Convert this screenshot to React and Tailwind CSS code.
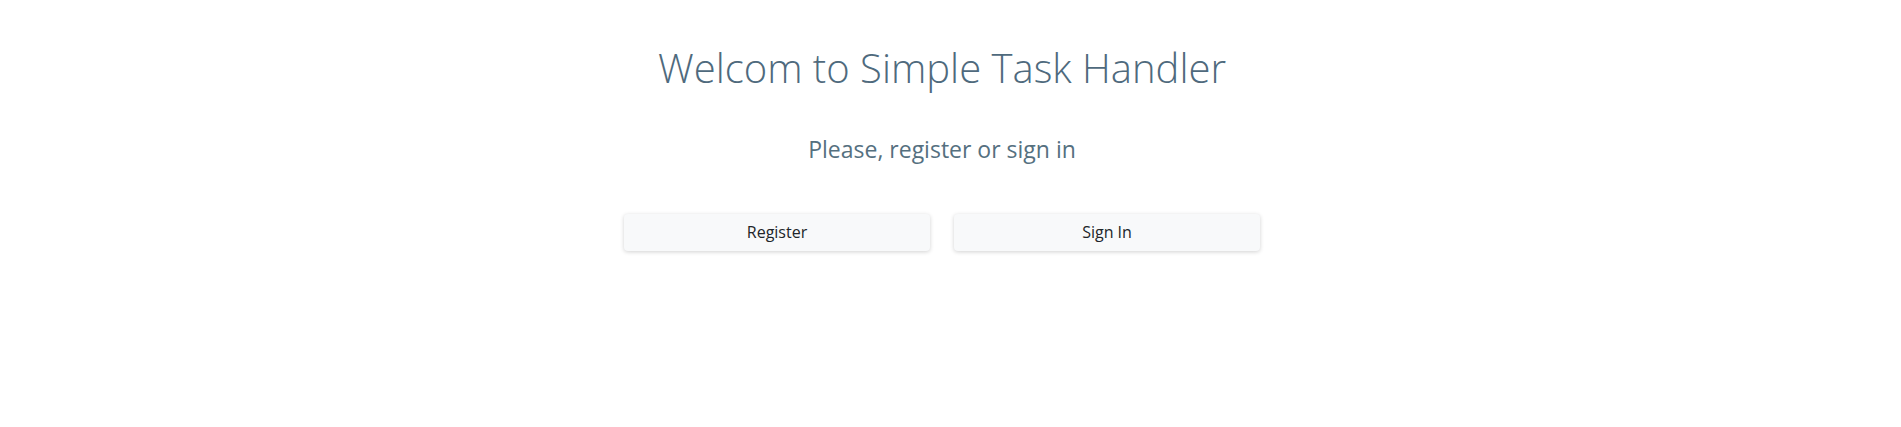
import React from "react";

const App = () => {
	return (
		<div className="min-h-[427px] bg-white pr-[17px]" style={{ fontFamily: '"Open Sans", "Noto Sans", sans-serif' }}>
			<div className="flex flex-col items-center pt-[44px]">
				<h1 className="text-[40px] font-light leading-[1.2] text-[#4f6a7d]">Welcom to Simple Task Handler</h1>
				<h3 className="mt-[44px] text-[23px] font-normal leading-[1.2] text-[#55707f]">Please, register or sign in</h3>
				<div className="mt-[50px] flex gap-[24px]">
					<button
						type="button"
						className="h-[37px] w-[306px] rounded-[4px] bg-[#f8f9fa] text-[16px] text-[#212529] shadow-[0_1px_4px_rgba(0,0,0,0.18)]"
					>
						Register
					</button>
					<button
						type="button"
						className="h-[37px] w-[306px] rounded-[4px] bg-[#f8f9fa] text-[16px] text-[#212529] shadow-[0_1px_4px_rgba(0,0,0,0.18)]"
					>
						Sign In
					</button>
				</div>
			</div>
		</div>
	);
};

export default App;
